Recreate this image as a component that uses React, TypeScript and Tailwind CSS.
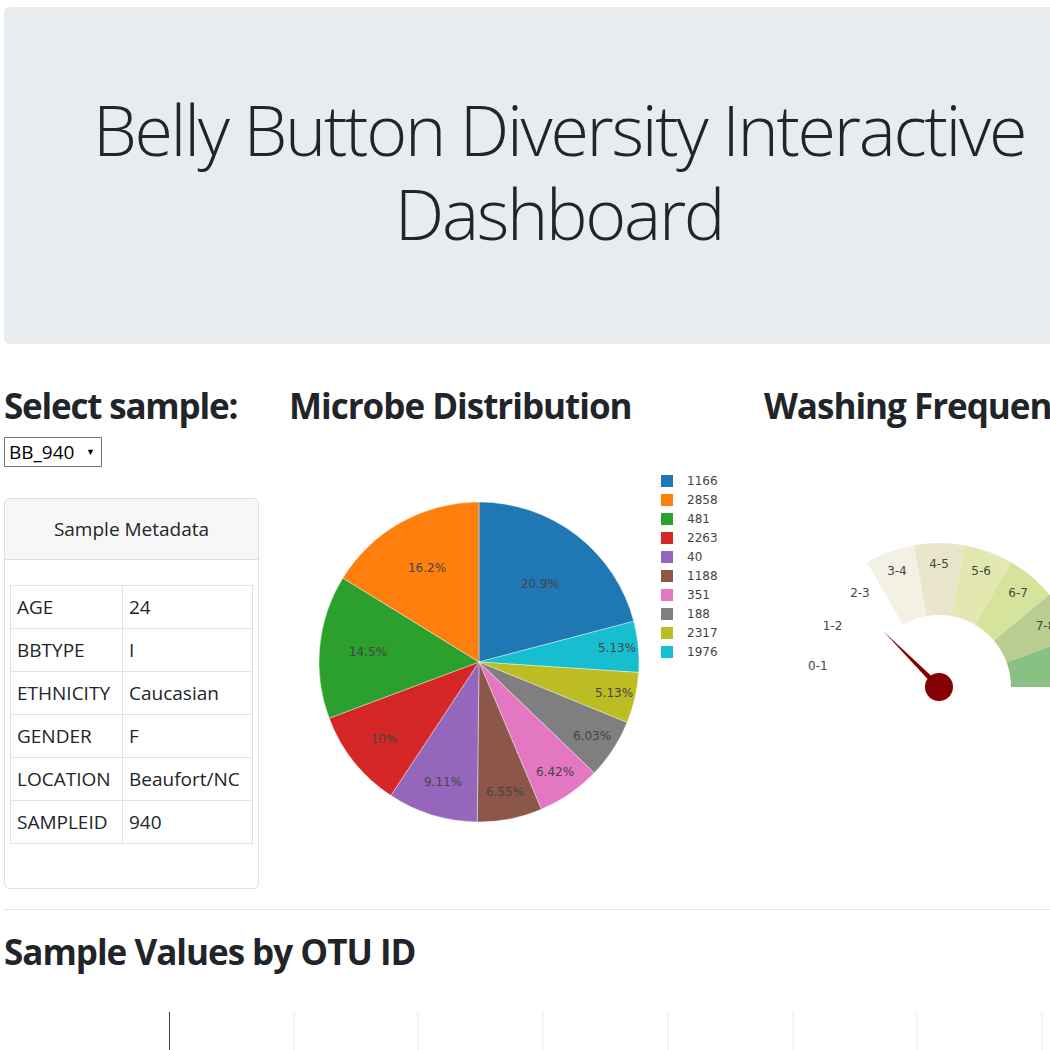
const slices = [
  { c: '#1f77b4', v: 20.9 },
  { c: '#17becf', v: 5.13 },
  { c: '#bcbd22', v: 5.13 },
  { c: '#7f7f7f', v: 6.03 },
  { c: '#e377c2', v: 6.42 },
  { c: '#8c564b', v: 6.55 },
  { c: '#9467bd', v: 9.11 },
  { c: '#d62728', v: 10 },
  { c: '#2ca02c', v: 14.5 },
  { c: '#ff7f0e', v: 16.2 },
]

const pieLabels: [string, number, number][] = [
  ['20.9%', 251, 147],
  ['16.2%', 138, 131],
  ['14.5%', 79, 215],
  ['10%', 95, 302],
  ['9.11%', 154, 345],
  ['6.55%', 216, 355],
  ['6.42%', 266, 335],
  ['6.03%', 303, 299],
  ['5.13%', 325, 256],
  ['5.13%', 328, 211],
]

const legend: [string, string][] = [
  ['1166', '#1f77b4'],
  ['2858', '#ff7f0e'],
  ['481', '#2ca02c'],
  ['2263', '#d62728'],
  ['40', '#9467bd'],
  ['1188', '#8c564b'],
  ['351', '#e377c2'],
  ['188', '#7f7f7f'],
  ['2317', '#bcbd22'],
  ['1976', '#17becf'],
]

const metadata: [string, string][] = [
  ['AGE', '24'],
  ['BBTYPE', 'I'],
  ['ETHNICITY', 'Caucasian'],
  ['GENDER', 'F'],
  ['LOCATION', 'Beaufort/NC'],
  ['SAMPLEID', '940'],
]

const gaugeColors = ['#ffffff', '#ffffff', '#ffffff', '#f3f0e4', '#e8e5cb', '#e3e8b1', '#d5e49a', '#b8cd8f', '#89c083']

function PieChart() {
  const cx = 190
  const cy = 225
  const r = 160
  const total = slices.reduce((s, x) => s + x.v, 0)
  let acc = 0
  const pt = (a: number) => [cx + r * Math.sin(a), cy - r * Math.cos(a)]
  return (
    <svg width="445" height="440" className="block">
      {slices.map((s, i) => {
        const a0 = (acc / total) * Math.PI * 2
        acc += s.v
        const a1 = (acc / total) * Math.PI * 2
        const [x0, y0] = pt(a0)
        const [x1, y1] = pt(a1)
        const large = a1 - a0 > Math.PI ? 1 : 0
        return (
          <path
            key={i}
            d={`M${cx},${cy} L${x0},${y0} A${r},${r} 0 ${large} 1 ${x1},${y1} Z`}
            fill={s.c}
            stroke="#ffffff"
            strokeWidth="0.4"
          />
        )
      })}
      {pieLabels.map(([t, x, y], i) => (
        <text key={i} x={x} y={y + 4} textAnchor="middle" fontSize="12" fill="#444" fontFamily="'DejaVu Sans', Verdana, sans-serif">
          {t}
        </text>
      ))}
      {legend.map(([t, c], i) => (
        <g key={t}>
          <rect x="372" y={38 + i * 19} width="12" height="12" fill={c} />
          <text x="398" y={48 + i * 19} fontSize="12" fill="#444" fontFamily="'DejaVu Sans', Verdana, sans-serif">
            {t}
          </text>
        </g>
      ))}
    </svg>
  )
}

function Gauge() {
  const cx = 175
  const cy = 250
  const ri = 72
  const ro = 144
  const rad = (d: number) => (d * Math.PI) / 180
  const p = (rr: number, d: number) => [cx + rr * Math.cos(rad(d)), cy - rr * Math.sin(rad(d))]
  const needle = 135
  const [tx, ty] = p(78, needle)
  const [b1x, b1y] = p(3, needle + 90)
  const [b2x, b2y] = p(3, needle - 90)
  return (
    <svg width="350" height="440" className="block">
      {gaugeColors.map((c, i) => {
        const d0 = 180 - 20 * i
        const d1 = 180 - 20 * (i + 1)
        const [ax, ay] = p(ro, d0)
        const [bx, by] = p(ro, d1)
        const [ix, iy] = p(ri, d1)
        const [jx, jy] = p(ri, d0)
        return (
          <path key={i} d={`M${ax},${ay} A${ro},${ro} 0 0 1 ${bx},${by} L${ix},${iy} A${ri},${ri} 0 0 0 ${jx},${jy} Z`} fill={c} />
        )
      })}
      {gaugeColors.map((_, i) => {
        const [x, y] = p(123, 170 - 20 * i)
        return (
          <text key={i} x={x} y={y + 4} textAnchor="middle" fontSize="12" fill="#444" fontFamily="'DejaVu Sans', Verdana, sans-serif">
            {`${i}-${i + 1}`}
          </text>
        )
      })}
      <polygon points={`${b1x},${b1y} ${tx},${ty} ${b2x},${b2y}`} fill="#850000" />
      <circle cx={cx} cy={cy} r="14" fill="#850000" />
    </svg>
  )
}

export default function App() {
  return (
    <div className="w-[1050px] h-[1050px] overflow-hidden bg-white text-[#212529] font-['Open_Sans',sans-serif]">
      <div className="w-[1110px] ml-[4px]">
        <div className="mt-[7px] h-[337px] rounded-[6px] bg-[#e9ecef] pt-[80px] px-[40px] text-center">
          <h1 className="text-[70px] leading-[84px] font-light tracking-[-2.3px]">
            Belly Button Diversity Interactive Dashboard
          </h1>
        </div>

        <div className="mt-[41px] flex gap-[30px]">
          <div className="w-[255px] shrink-0">
            <h3 className="text-[35px] leading-[42px] font-bold tracking-[-1.2px] mb-[10px]">Select sample:</h3>
            <div className="w-[98px] h-[30px] border border-[#767676] flex items-center justify-between pl-[4px] pr-[6px] text-[19px] text-black">
              <span>BB_940</span>
              <span className="text-[9px]">▼</span>
            </div>
            <div className="mt-[31px] h-[391px] border border-[#dfdfdf] rounded-[5px] flex flex-col">
              <div className="h-[61px] bg-[#f7f7f7] border-b border-[#dfdfdf] rounded-t-[5px] flex items-center justify-center text-[19px]">
                Sample Metadata
              </div>
              <div className="pt-[25px] px-[5px]">
                <table className="w-[243px] border-collapse text-[19px]">
                  <tbody>
                    {metadata.map(([k, v]) => (
                      <tr key={k} className="h-[43px]">
                        <td className="w-[112px] border border-[#dee2e6] pl-[6px] whitespace-nowrap">{k}</td>
                        <td className="border border-[#dee2e6] pl-[6px]">{v}</td>
                      </tr>
                    ))}
                  </tbody>
                </table>
              </div>
            </div>
          </div>

          <div className="w-[445px] shrink-0">
            <h3 className="text-[35px] leading-[42px] font-bold tracking-[-1px] mb-[10px] whitespace-nowrap">Microbe Distribution</h3>
            <PieChart />
          </div>

          <div className="w-[350px] shrink-0">
            <h3 className="text-[35px] leading-[42px] font-bold tracking-[-1px] mb-[10px] whitespace-nowrap">Washing Frequency</h3>
            <Gauge />
          </div>
        </div>

        <hr className="mt-[20px] mb-[21px] border-0 border-t border-[#e5e5e5]" />

        <h3 className="text-[35px] leading-[42px] font-bold tracking-[-1px] mb-[10px]">Sample Values by OTU ID</h3>
        <svg width="1110" height="70" className="block">
          {[290, 414, 539, 664, 789, 913, 1038].map((x) => (
            <line key={x} x1={x} y1="29" x2={x} y2="70" stroke="#eeeeee" strokeWidth="1" />
          ))}
          <line x1="165.5" y1="29" x2="165.5" y2="70" stroke="#444" strokeWidth="1" />
        </svg>
      </div>
    </div>
  )
}
